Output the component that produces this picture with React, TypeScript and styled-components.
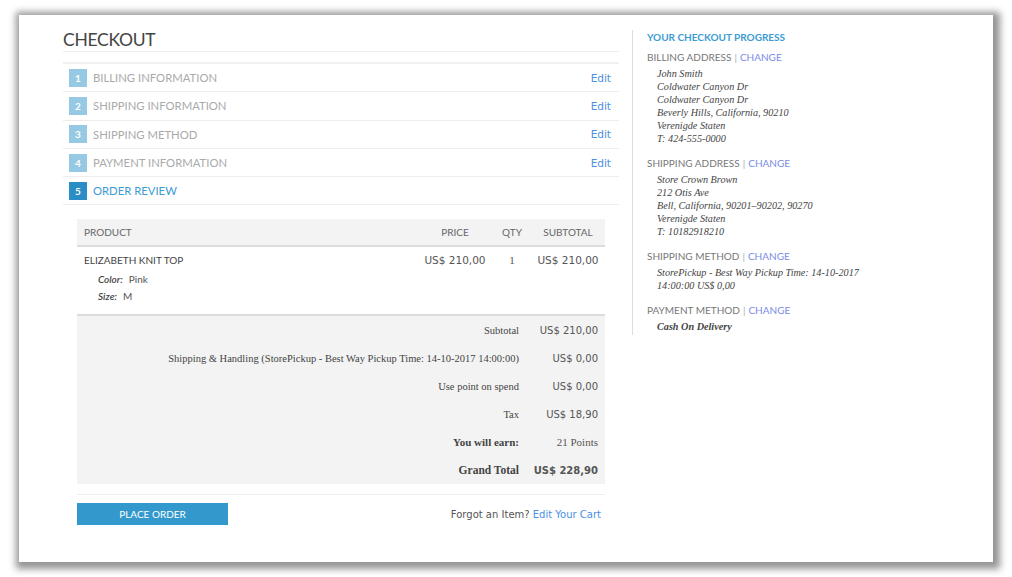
import React from "react";
import styled, { createGlobalStyle } from "styled-components";

const Global = createGlobalStyle`
  html, body { margin: 0; padding: 0; background: #fff; }
  body { font-family: "Lato", "Open Sans", sans-serif; }
`;

const Frame = styled.div`
  padding: 15px 0 0 19px;
  width: 1012px;
  height: 577px;
  box-sizing: border-box;
  overflow: hidden;
`;

const Panel = styled.div`
  width: 974px;
  height: 547px;
  background: #fff;
  box-shadow: 2px 2px 7px 5px rgba(0, 0, 0, 0.42);
  box-sizing: border-box;
  padding: 0 0 0 44px;
  display: flex;
  align-items: flex-start;
`;

const Main = styled.div`
  width: 556px;
  display: flex;
  flex-direction: column;
`;

const Title = styled.h1`
  margin: 0;
  padding: 14px 0 0;
  font-family: "Lato", sans-serif;
  font-weight: 400;
  font-size: 17.5px;
  letter-spacing: -0.3px;
  line-height: 22px;
  color: #444;
  border-bottom: 1px solid #eee;
`;

const Steps = styled.div`
  margin-top: 10px;
  border-top: 2px solid #f1f1f1;
`;

const StepRow = styled.div`
  height: 28.3px;
  box-sizing: border-box;
  border-bottom: 1px solid #ededed;
  display: flex;
  align-items: center;
  padding: 0 8px 0 6px;
`;

const StepNum = styled.span<{ $active?: boolean }>`
  width: 18px;
  height: 18px;
  display: flex;
  align-items: center;
  justify-content: center;
  background: ${(p) => (p.$active ? "#2b8dc6" : "#95c9e4")};
  color: #fff;
  font-family: "Lato", sans-serif;
  font-size: 10px;
  font-weight: 700;
`;

const StepLabel = styled.span<{ $active?: boolean }>`
  margin-left: 6px;
  flex: 1;
  font-family: "Lato", sans-serif;
  font-size: 11.3px;
  color: ${(p) => (p.$active ? "#3b9bd4" : "#aaa")};
`;

const EditLink = styled.a`
  font-family: "DejaVu Sans", sans-serif;
  font-size: 10.5px;
  color: #4b8fe2;
  text-decoration: none;
`;

const Table = styled.div`
  margin: 14px 14px 0;
`;

const HeadRow = styled.div`
  display: grid;
  grid-template-columns: 1fr 76px 38px 74px;
  height: 26px;
  align-items: center;
  background: #f3f3f3;
  border-bottom: 2px solid #dcdcdc;
`;

const HeadCell = styled.div<{ $left?: boolean }>`
  font-family: "Lato", sans-serif;
  font-size: 10px;
  color: #666;
  text-align: ${(p) => (p.$left ? "left" : "center")};
  padding-left: ${(p) => (p.$left ? "7px" : "0")};
`;

const ItemRow = styled.div`
  display: grid;
  grid-template-columns: 1fr 76px 38px 74px;
  height: 69px;
  border-bottom: 2px solid #dcdcdc;
  padding-top: 7px;
  box-sizing: border-box;
  align-items: start;
`;

const ProductCell = styled.div`
  padding-left: 7px;
`;

const ProductName = styled.div`
  font-family: "Lato", sans-serif;
  font-size: 10px;
  line-height: 13px;
  color: #444;
  margin-bottom: 4px;
`;

const Option = styled.div`
  padding-left: 14px;
  font-family: "Lato", sans-serif;
  font-size: 10px;
  line-height: 17px;
  color: #555555;
`;

const OptionLabel = styled.em`
  font-weight: 600;
  margin-right: 6px;
  color: #444444;
`;

const Money = styled.div`
  font-family: "DejaVu Sans", sans-serif;
  font-size: 10.5px;
  line-height: 13px;
  color: #555;
  text-align: center;
  white-space: nowrap;
`;

const SerifNum = styled.div`
  font-family: "Liberation Serif", serif;
  font-size: 11px;
  line-height: 13px;
  color: #555555;
  text-align: center;
`;

const Totals = styled.div`
  background: #f3f3f3;
  height: 168px;
`;

const TotalRow = styled.div`
  display: grid;
  grid-template-columns: 1fr 77px;
  height: 28px;
  align-items: center;
`;

const TotalLabel = styled.div<{ $strong?: boolean; $big?: boolean }>`
  text-align: right;
  padding-right: 9px;
  font-family: "Liberation Serif", serif;
  font-size: ${(p) => (p.$big ? "11.5px" : p.$strong ? "11px" : "10.5px")};
  font-weight: ${(p) => (p.$strong ? 700 : 400)};
  color: #444;
  white-space: nowrap;
`;

const TotalValue = styled.div<{ $strong?: boolean; $serif?: boolean }>`
  text-align: right;
  padding-right: 7px;
  white-space: nowrap;
  font-family: ${(p) => (p.$serif ? '"Liberation Serif", serif' : '"DejaVu Sans", sans-serif')};
  font-size: ${(p) => (p.$serif ? "11px" : "10px")};
  font-weight: ${(p) => (p.$strong ? 700 : 400)};
  color: #555;
`;

const Footer = styled.div`
  margin: 10px 14px 0;
  border-top: 1px solid #eee;
  padding-top: 8px;
  display: flex;
  align-items: center;
  justify-content: space-between;
`;

const PlaceOrder = styled.button`
  width: 151px;
  height: 22px;
  border: none;
  background: #3399cc;
  color: #fff;
  font-family: "Lato", sans-serif;
  font-size: 10px;
  padding: 0;
  cursor: pointer;
`;

const Forgot = styled.div`
  font-family: "DejaVu Sans", sans-serif;
  font-size: 10px;
  color: #555;
  padding-right: 4px;
`;

const ForgotLink = styled.a`
  color: #4b8fe2;
  text-decoration: none;
`;

const Sidebar = styled.aside`
  margin: 15px 0 0 13px;
  border-left: 1px solid #ddd;
  padding-left: 14px;
  width: 260px;
  height: 305px;
  box-sizing: border-box;
`;

const SideTitle = styled.div`
  font-family: "Lato", sans-serif;
  font-weight: 700;
  font-size: 10px;
  line-height: 14px;
  color: #3b9bd4;
`;

const Section = styled.div<{ $first?: boolean }>`
  margin-top: ${(p) => (p.$first ? "6px" : "11px")};
`;

const SectionHead = styled.div`
  font-family: "Lato", sans-serif;
  font-size: 10px;
  line-height: 14px;
  color: #777;
`;

const Change = styled.a`
  color: #7a8be6;
  text-decoration: none;
`;

const Sep = styled.span`
  color: #aaa;
  margin: 0 3px;
`;

const Address = styled.div<{ $bold?: boolean }>`
  margin-top: 3px;
  padding-left: 10px;
  font-family: "Liberation Serif", serif;
  font-style: italic;
  font-weight: ${(p) => (p.$bold ? 700 : 400)};
  font-size: 10.2px;
  line-height: 13px;
  color: #444;
`;

const steps = [
  "BILLING INFORMATION",
  "SHIPPING INFORMATION",
  "SHIPPING METHOD",
  "PAYMENT INFORMATION",
  "ORDER REVIEW",
];

const totals: { label: string; value: string; strong?: boolean; serif?: boolean }[] = [
  { label: "Subtotal", value: "US$ 210,00" },
  {
    label: "Shipping & Handling (StorePickup - Best Way Pickup Time: 14-10-2017 14:00:00)",
    value: "US$ 0,00",
  },
  { label: "Use point on spend", value: "US$ 0,00" },
  { label: "Tax", value: "US$ 18,90" },
  { label: "You will earn:", value: "21 Points", serif: true },
  { label: "Grand Total", value: "US$ 228,90", strong: true },
];

const sections: { head: string; lines: string[]; bold?: boolean }[] = [
  {
    head: "BILLING ADDRESS",
    lines: [
      "John Smith",
      "Coldwater Canyon Dr",
      "Coldwater Canyon Dr",
      "Beverly Hills, California, 90210",
      "Verenigde Staten",
      "T: 424-555-0000",
    ],
  },
  {
    head: "SHIPPING ADDRESS",
    lines: [
      "Store Crown Brown",
      "212 Otis Ave",
      "Bell, California, 90201–90202, 90270",
      "Verenigde Staten",
      "T: 10182918210",
    ],
  },
  {
    head: "SHIPPING METHOD",
    lines: ["StorePickup - Best Way Pickup Time: 14-10-2017", "14:00:00 US$ 0,00"],
  },
  { head: "PAYMENT METHOD", lines: ["Cash On Delivery"], bold: true },
];

export default function App() {
  return (
    <>
      <Global />
      <Frame>
        <Panel>
          <Main>
            <Title>CHECKOUT</Title>
            <Steps>
              {steps.map((s, i) => {
                const active = i === steps.length - 1;
                return (
                  <StepRow key={s}>
                    <StepNum $active={active}>{i + 1}</StepNum>
                    <StepLabel $active={active}>{s}</StepLabel>
                    {!active && <EditLink href="#">Edit</EditLink>}
                  </StepRow>
                );
              })}
            </Steps>
            <Table>
              <HeadRow>
                <HeadCell $left>PRODUCT</HeadCell>
                <HeadCell>PRICE</HeadCell>
                <HeadCell>QTY</HeadCell>
                <HeadCell>SUBTOTAL</HeadCell>
              </HeadRow>
              <ItemRow>
                <ProductCell>
                  <ProductName>ELIZABETH KNIT TOP</ProductName>
                  <Option>
                    <OptionLabel>Color:</OptionLabel>Pink
                  </Option>
                  <Option>
                    <OptionLabel>Size:</OptionLabel>M
                  </Option>
                </ProductCell>
                <Money>US$ 210,00</Money>
                <SerifNum>1</SerifNum>
                <Money>US$ 210,00</Money>
              </ItemRow>
              <Totals>
                {totals.map((t, i) => (
                  <TotalRow key={t.label}>
                    <TotalLabel $strong={i >= 4} $big={i === 5}>
                      {t.label}
                    </TotalLabel>
                    <TotalValue $strong={t.strong} $serif={t.serif}>
                      {t.value}
                    </TotalValue>
                  </TotalRow>
                ))}
              </Totals>
            </Table>
            <Footer>
              <PlaceOrder>PLACE ORDER</PlaceOrder>
              <Forgot>
                Forgot an Item? <ForgotLink href="#">Edit Your Cart</ForgotLink>
              </Forgot>
            </Footer>
          </Main>
          <Sidebar>
            <SideTitle>YOUR CHECKOUT PROGRESS</SideTitle>
            {sections.map((sec, i) => (
              <Section key={sec.head} $first={i === 0}>
                <SectionHead>
                  {sec.head}
                  <Sep>|</Sep>
                  <Change href="#">CHANGE</Change>
                </SectionHead>
                <Address $bold={sec.bold}>
                  {sec.lines.map((l) => (
                    <div key={l}>{l}</div>
                  ))}
                </Address>
              </Section>
            ))}
          </Sidebar>
        </Panel>
      </Frame>
    </>
  );
}
